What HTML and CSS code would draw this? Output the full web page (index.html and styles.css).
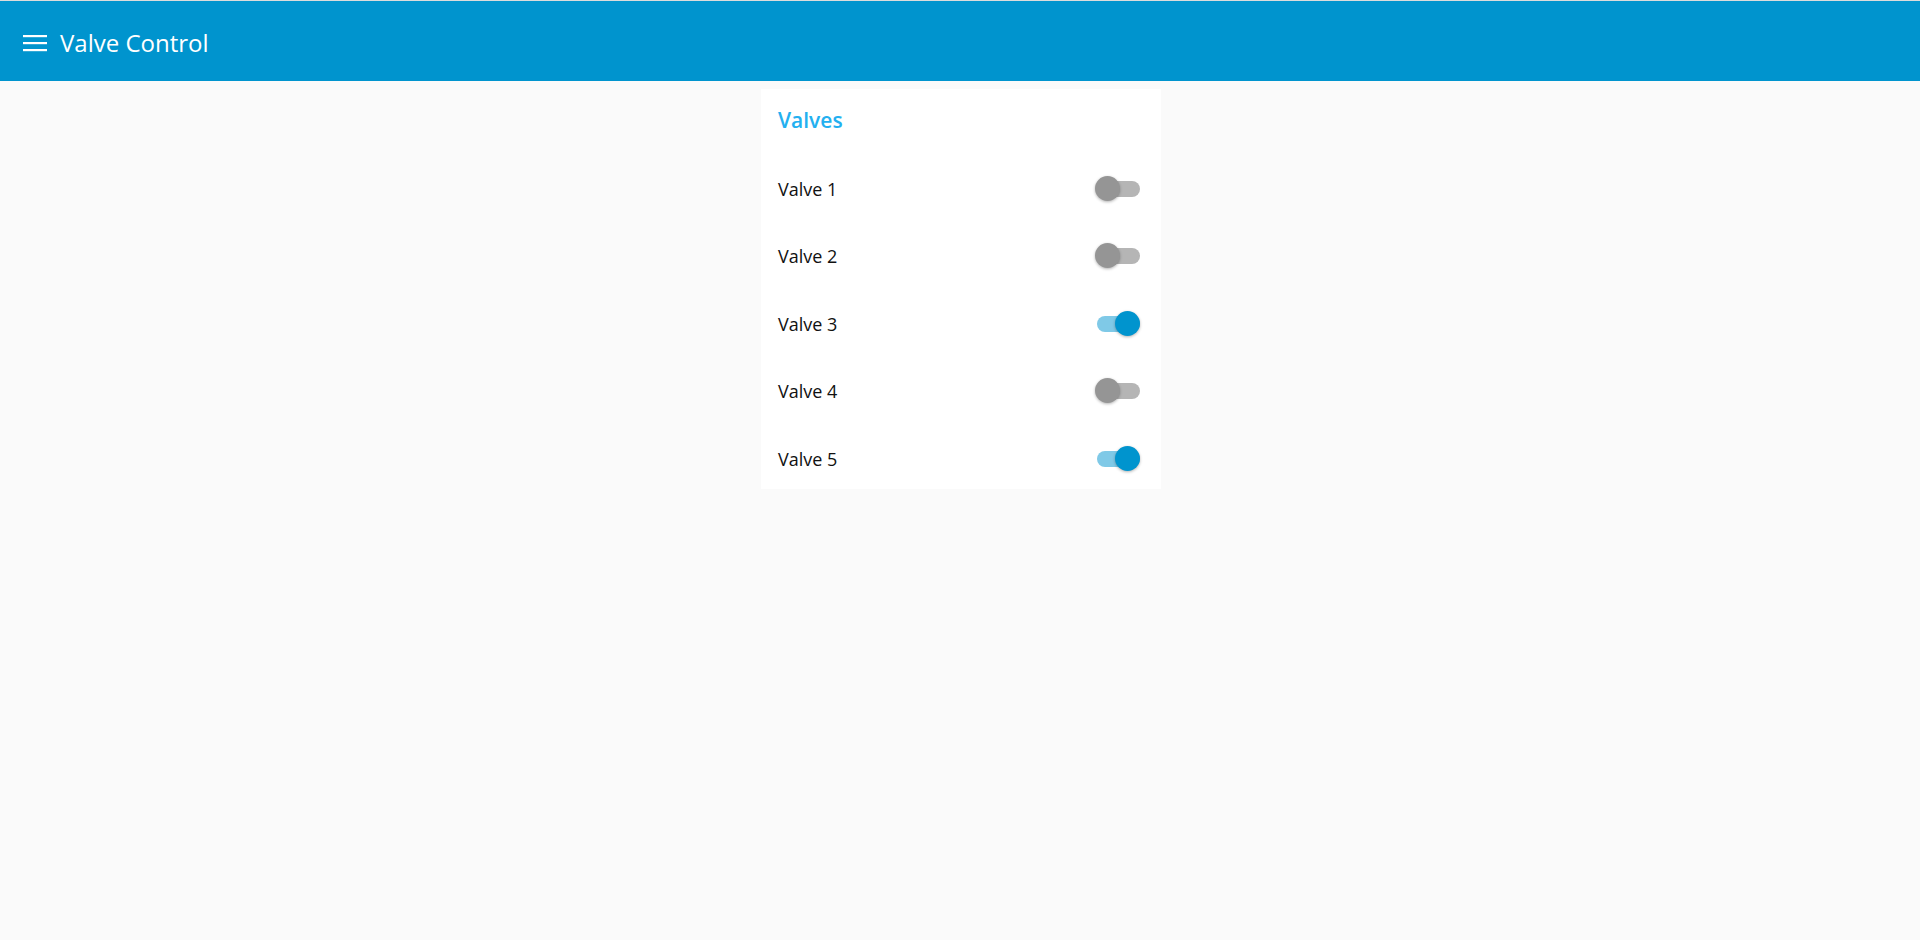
FILE: index.html
```html
<!DOCTYPE html>
<html>
<head>
<meta charset="utf-8">
<link rel="stylesheet" href="styles.css">
</head>
<body>
<div class="topline"></div>
<header class="toolbar">
  <svg class="menu" width="24" height="18" viewBox="0 0 24 18"><rect x="0" y="1" width="24" height="2.2" fill="#fff"/><rect x="0" y="8" width="24" height="2.2" fill="#fff"/><rect x="0" y="15" width="24" height="2.2" fill="#fff"/></svg>
  <span class="title">Valve Control</span>
</header>
<main class="content">
  <section class="card">
    <div class="card-title">Valves</div>
    <div class="row"><span class="label">Valve 1</span><span class="switch"><span class="track"></span><span class="knob"></span></span></div>
    <div class="row"><span class="label">Valve 2</span><span class="switch"><span class="track"></span><span class="knob"></span></span></div>
    <div class="row"><span class="label">Valve 3</span><span class="switch on"><span class="track"></span><span class="knob"></span></span></div>
    <div class="row"><span class="label">Valve 4</span><span class="switch"><span class="track"></span><span class="knob"></span></span></div>
    <div class="row"><span class="label">Valve 5</span><span class="switch on"><span class="track"></span><span class="knob"></span></span></div>
  </section>
</main>
</body>
</html>
```
FILE: styles.css
```css
html, body {
  margin: 0;
  padding: 0;
  background: #fafafa;
  font-family: "Open Sans", "Noto Sans", sans-serif;
}
.topline {
  height: 1px;
  background: #dcdcdc;
}
.toolbar {
  height: 80px;
  background: #0094ce;
  display: flex;
  align-items: center;
  padding-left: 23px;
  gap: 13px;
}
.menu {
  display: block;
  margin-top: 3px;
}
.title {
  color: #fff;
  font-size: 24px;
  padding-top: 3px;
}
.content {
  display: flex;
  justify-content: center;
  padding-top: 8px;
  padding-left: 2px;
}
.card {
  width: 400px;
  height: 400px;
  background: #fff;
  box-sizing: border-box;
  padding: 0 17px;
}
.card-title {
  height: 66px;
  display: flex;
  align-items: center;
  color: #23b0f0;
  font-size: 21px;
  font-weight: 600;
  padding-bottom: 4px;
  box-sizing: border-box;
}
.row {
  height: 67.5px;
  display: flex;
  align-items: center;
  justify-content: space-between;
}
.label {
  font-size: 18px;
  color: #111;
}
.switch {
  position: relative;
  width: 46px;
  height: 26px;
  margin-right: 3px;
}
.track {
  position: absolute;
  left: 2px;
  right: 1px;
  top: 5px;
  height: 16px;
  border-radius: 8px;
  background: #b5b5b5;
}
.knob {
  position: absolute;
  left: 0;
  top: 0;
  width: 25px;
  height: 25px;
  border-radius: 50%;
  background: #959595;
  box-shadow: 0 1px 3px rgba(0,0,0,0.3);
}
.switch.on .track {
  background: #7fc9e7;
}
.switch.on .knob {
  left: 20px;
  background: #0094ce;
}
```
